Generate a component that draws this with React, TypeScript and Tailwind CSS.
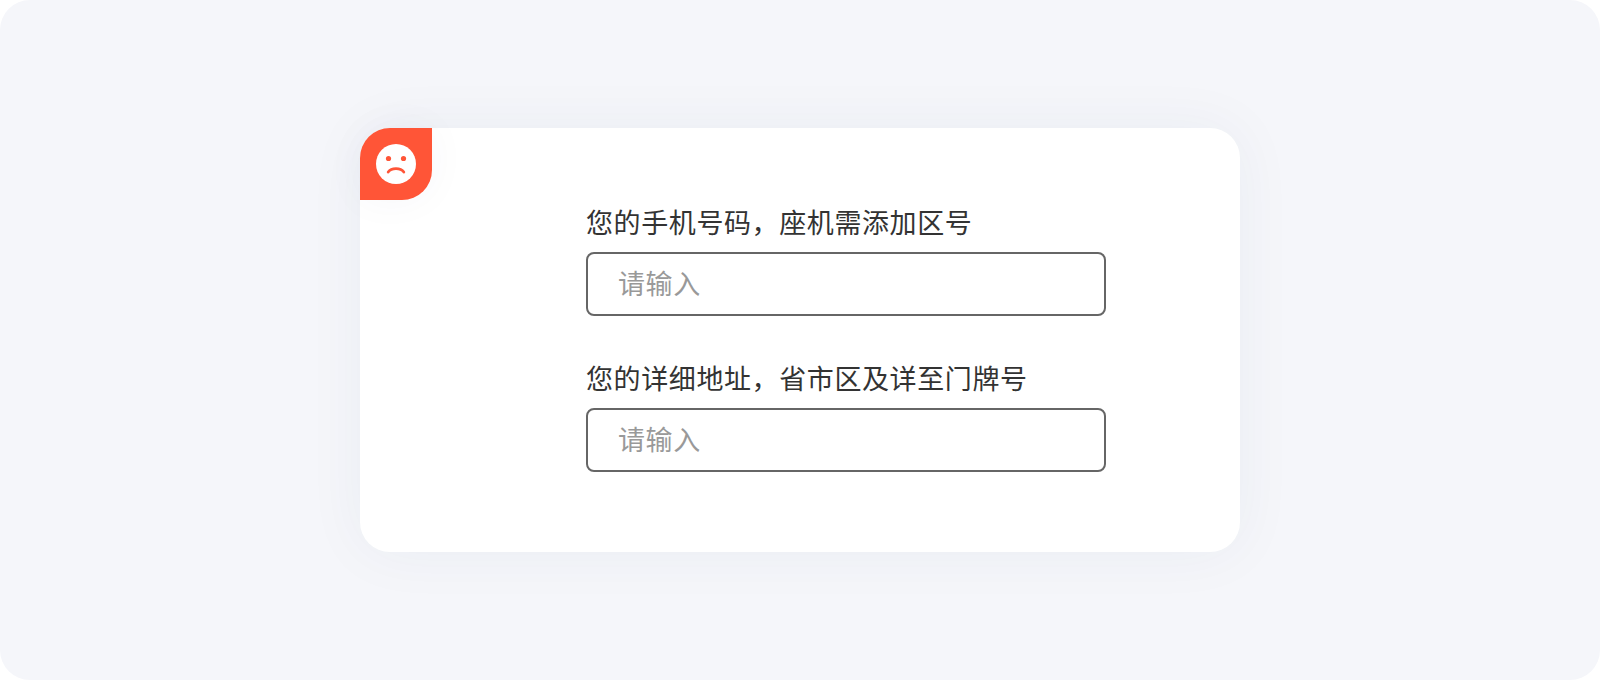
const fields = ['您的手机号码，座机需添加区号', '您的详细地址，省市区及详至门牌号']

export default function App() {
  return (
    <div className="w-[1600px] h-[680px] bg-white" style={{ fontFamily: '"Noto Sans CJK SC", sans-serif' }}>
      <div className="w-full h-full rounded-[30px] bg-[#f5f6fa] flex items-center justify-center">
        <div className="relative w-[880px] h-[424px] rounded-[30px] bg-white shadow-[0_0_60px_rgba(40,50,90,0.05)] pt-[76px] pl-[226px] flex flex-col gap-11">
          <div className="absolute left-0 top-0 w-[72px] h-[72px] bg-[#ff5537] rounded-tl-[30px] rounded-br-[30px] shadow-[0_0_40px_rgba(40,50,90,0.04)] flex items-center justify-center">
            <svg width="40" height="40" viewBox="0 0 40 40">
              <circle cx="20" cy="20" r="20" fill="#fff" />
              <circle cx="12.5" cy="14.5" r="2.6" fill="#ff5537" />
              <circle cx="27.5" cy="14.5" r="2.6" fill="#ff5537" />
              <path d="M12.2 28 C14 25.5 17 24.7 20 24.7 C23 24.7 26 25.5 27.8 28" fill="none" stroke="#ff5537" strokeWidth="2.8" strokeLinecap="round" />
            </svg>
          </div>
          {fields.map(label => (
            <div key={label} className="w-[520px] flex flex-col gap-3">
              <div className="h-9 text-[27px] leading-9 tracking-[0.6px] text-[#333333]">{label}</div>
              <input
                placeholder="请输入"
                className="w-full h-16 rounded-lg border-2 border-[#666666] pl-[30px] pr-[30px] pb-1 text-[27px] tracking-[0.6px] outline-none placeholder:text-[#999999]"
              />
            </div>
          ))}
        </div>
      </div>
    </div>
  )
}
